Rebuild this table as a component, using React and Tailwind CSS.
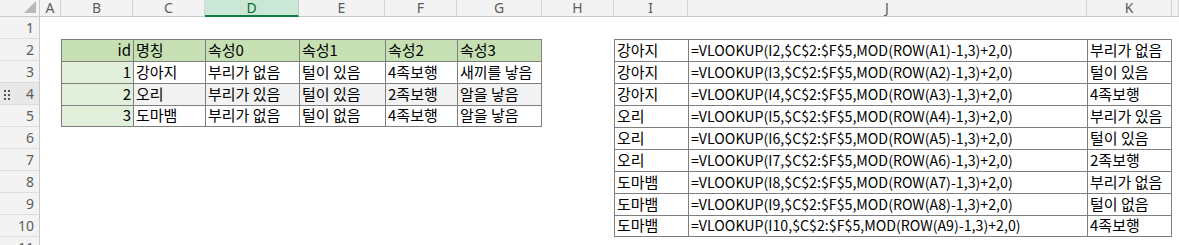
import React from 'react';
import clsx from 'clsx';

const COLS = ['A', 'B', 'C', 'D', 'E', 'F', 'G', 'H', 'I', 'J', 'K', ''];

const animals = [
  [1, '강아지', '부리가 없음', '털이 있음', '4족보행', '새끼를 낳음'],
  [2, '오리', '부리가 있음', '털이 있음', '2족보행', '알을 낳음'],
  [3, '도마뱀', '부리가 없음', '털이 없음', '4족보행', '알을 낳음'],
];
const header = ['id', '명칭', '속성0', '속성1', '속성2', '속성3'];

const results = ['부리가 없음', '털이 있음', '4족보행', '부리가 있음', '털이 있음', '2족보행', '부리가 없음', '털이 없음', '4족보행'];
const names = ['강아지', '강아지', '강아지', '오리', '오리', '오리', '도마뱀', '도마뱀', '도마뱀'];

function cellFor(row, col) {
  // left table B2:G5
  if (row >= 2 && row <= 5 && col >= 1 && col <= 6) {
    const isHead = row === 2;
    const value = isHead ? header[col - 1] : animals[row - 3][col - 1];
    return {
      value,
      right: col === 1,
      bg: isHead ? 'bg-[#c6e0b4]' : col === 1 ? 'bg-[#e2efda]' : row === 4 ? 'bg-[#f2f2f2]' : 'bg-white',
      lastCol: col === 6,
      lastRow: row === 5,
    };
  }
  // right table I2:K10
  if (row >= 2 && row <= 10 && col >= 8 && col <= 10) {
    const i = row - 2;
    let value;
    if (col === 8) value = names[i];
    if (col === 9) value = `=VLOOKUP(I${row},$C$2:$F$5,MOD(ROW(A${row - 1})-1,3)+2,0)`;
    if (col === 10) value = results[i];
    return { value, formula: col === 9, bg: 'bg-white', lastCol: col === 10, lastRow: row === 10 };
  }
  return null;
}

function Corner() {
  return (
    <div className="relative border-b border-r border-[#c9c9c9] bg-[#f3f3f3]">
      <div className="absolute bottom-[3px] right-[3px] h-[12px] w-[12px] bg-[#b7b7b7] [clip-path:polygon(100%_0,100%_100%,0_100%)]" />
    </div>
  );
}

function ColHead({ label }) {
  const active = label === 'D';
  return (
    <div
      className={clsx(
        'flex items-center justify-center overflow-visible border-r text-[14px]',
        active
          ? 'border-b-2 border-r-[#c9c9c9] border-b-[#107c41] bg-[#cae8d5] leading-[15px] text-[#0e6b38]'
          : 'border-b border-[#d4d4d4] border-b-[#c9c9c9] bg-[#f3f3f3] leading-[16px] text-[#5c5c5c]'
      )}
    >
      {label}
    </div>
  );
}

function RowHead({ n }) {
  return (
    <div
      className={clsx(
        'relative flex items-center justify-end border-b border-r border-b-[#dcdcdc] border-r-[#c9c9c9] pr-[5px] text-[14px] text-[#5c5c5c]',
        n === 4 ? 'bg-[#e8e8e8]' : 'bg-[#f3f3f3]'
      )}
    >
      {n === 4 && (
        <div className="absolute left-[4px] top-[7px] grid grid-cols-2 gap-x-[2px] gap-y-[2px]">
          {[0, 1, 2, 3, 4, 5].map((d) => (
            <span key={d} className="h-[2px] w-[2px] bg-[#555]" />
          ))}
        </div>
      )}
      {n}
    </div>
  );
}

export default function App() {
  const rows = Array.from({ length: 11 }, (_, i) => i + 1);
  return (
    <div className="h-[245px] w-[1179px] overflow-hidden bg-white font-['Noto_Sans',sans-serif]">
      <div className="grid grid-cols-[40px_21px_72px_72px_94px_86px_72px_85px_72px_74px_399px_85px_1fr] grid-rows-[17px_repeat(11,22px)]">
        <Corner />
        {COLS.map((c, i) => (
          <ColHead key={i} label={c} />
        ))}
        {rows.map((r) => (
          <React.Fragment key={r}>
            <RowHead n={r} />
            {COLS.map((_, c) => {
              const cell = cellFor(r, c);
              if (!cell) return <div key={c} className="bg-white" />;
              return (
                <div
                  key={c}
                  className={clsx(
                    'flex items-end overflow-visible whitespace-nowrap border-l border-t border-[#7f7f7f] pb-[1px] font-["Noto_Sans_CJK_KR",sans-serif] leading-[20px] text-black',
                    cell.formula ? 'text-[14.2px]' : 'text-[15px]',
                    cell.bg,
                    cell.right ? 'justify-end pr-[2px]' : 'pl-[2px]',
                    cell.lastCol && 'border-r',
                    cell.lastRow && 'border-b'
                  )}
                >
                  {cell.value}
                </div>
              );
            })}
          </React.Fragment>
        ))}
      </div>
    </div>
  );
}
